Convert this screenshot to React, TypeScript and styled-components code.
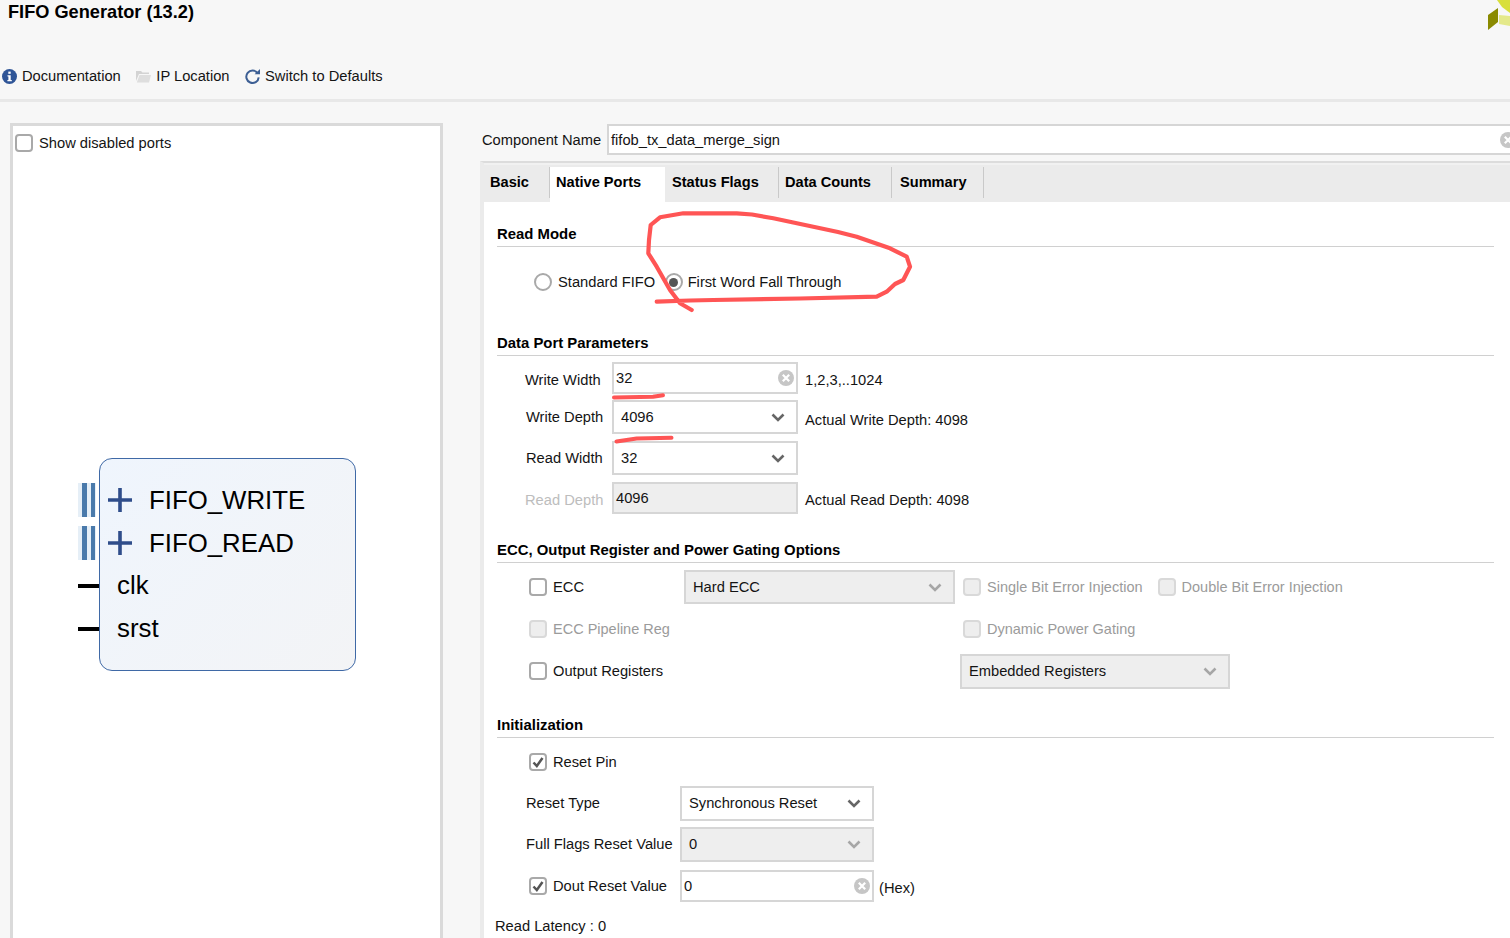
import React from "react";
import styled, { createGlobalStyle } from "styled-components";

const Global = createGlobalStyle`
  html, body { margin: 0; padding: 0; overflow: hidden; background: #f7f7f7; }
  #root { width: 1510px; height: 938px; overflow: hidden; position: relative; }
  * { box-sizing: border-box; }
`;

const Page = styled.div`
  width: 1510px; height: 938px; background: #f7f7f7; color: #141414;
  font-family: "Liberation Sans", Arial, sans-serif; font-size: 14.7px; line-height: 20px;
  overflow: hidden; position: relative;
`;
const Header = styled.header`
  height: 102px; border-bottom: 3px solid #e8e8e8; display: flex; flex-direction: column;
`;
const TitleRow = styled.div`
  height: 42px; display: flex; justify-content: space-between; align-items: flex-start;
`;
const Title = styled.h1`
  margin: 0; padding-left: 8px; font-size: 18.2px; line-height: 24px; font-weight: 700; color: #000;
`;
const Toolbar = styled.div`
  margin-top: 24px; padding-left: 2px; display: flex; gap: 15.5px; height: 20px;
`;
const ToolItem = styled.div`
  display: flex; align-items: center; gap: 5px; white-space: nowrap;
`;
const Main = styled.main`display: flex; align-items: flex-start;`;
const SidePanel = styled.aside`
  margin: 21px 0 0 10px; width: 433px; height: 830px; background: #fff;
  border: 3px solid #dadada; padding: 7px 0 0 2px;
`;
const CheckRow = styled.div<{ $ml?: number; $gap?: number; $muted?: boolean }>`
  display: flex; align-items: center; gap: ${p => p.$gap ?? 6}px; margin-left: ${p => p.$ml ?? 0}px;
  white-space: nowrap; color: ${p => (p.$muted ? "#9b9b9b" : "inherit")};
  font-size: ${p => (p.$muted ? "14.5px" : "inherit")};
`;
const Box = styled.span<{ $disabled?: boolean }>`
  width: 18px; height: 18px; border-radius: 4px; flex: none; display: flex; align-items: center; justify-content: center;
  border: 2px solid ${p => (p.$disabled ? "#d9d9d9" : "#a9a9a9")};
  background: ${p => (p.$disabled ? "#eeeeee" : "#fff")};
`;
const Symbol = styled.div`display: flex; margin: 305px 0 0 63px;`;
const PinColumn = styled.div`width: 21px; padding-top: 20px;`;
const PinSlot = styled.div`height: 43px; display: flex; align-items: center;`;
const BusPin = styled.div`
  width: 18px; height: 34px; background: #e6eff7; display: flex; gap: 4px; padding: 0 0 0 4px;
`;
const BusBar = styled.span`width: 4.5px; height: 100%; background: #4a7aab;`;
const WirePin = styled.span`width: 21px; height: 4px; background: #000;`;
const Block = styled.div`
  width: 257px; height: 213px; border: 1px solid #3f69a6; border-radius: 13px; padding-top: 19px;
  background: linear-gradient(135deg, #eff5fd, #f3f4f6); color: #000;
`;
const Port = styled.div<{ $plain?: boolean }>`
  height: 43px; display: flex; align-items: center; padding-left: ${p => (p.$plain ? 17 : 8)}px;
  padding-bottom: ${p => (p.$plain ? 2 : 0)}px;
  font-size: 25.8px; line-height: 30px;
`;
const PortPlus = styled.svg`width: 24px; height: 24px; margin-right: 17px; flex: none;`;

const RightColumn = styled.section`margin: 22px 0 0 37px; width: 1030px;`;
const NameRow = styled.div`display: flex; align-items: center; padding-left: 2px; height: 31px; gap: 6px; white-space: nowrap;`;
const NameLabel = styled.span`width: 119px; flex: none;`;
const Field = styled.div<{ $w: number; $disabled?: boolean; $pad?: number }>`
  width: ${p => p.$w}px; height: 100%; flex: none; display: flex; align-items: center; justify-content: space-between;
  border: 2px solid #d6d6d6; background: ${p => (p.$disabled ? "#eeeeee" : "#fff")};
  padding: 0 ${p => (p.$pad === undefined ? 2 : 4)}px 0 ${p => p.$pad ?? 2}px; white-space: nowrap;
`;
const Value = styled.span<{ $dy?: number }>`padding-bottom: ${p => p.$dy ?? 0}px;`;
const ChevronSlot = styled.span`display: flex; padding-right: 7px;`;
const Tabs = styled.div`margin-top: 6px; border-top: 2px solid #dcdcdc; border-left: 4px solid #ebebeb; background: #fff; height: 790px;`;
const TabStrip = styled.div`height: 39px; background: #ebebeb; padding-top: 2px; display: flex; align-items: stretch; border-top: 2px solid #f1f1f1;`;
const Tab = styled.div<{ $w: number; $pl?: number; $active?: boolean; $sep?: boolean }>`
  width: ${p => p.$w}px; padding-left: ${p => p.$pl ?? 6}px; height: ${p => (p.$active ? 35 : 31)}px;
  background: ${p => (p.$active ? "#fff" : "transparent")}; font-weight: 700; font-size: 14.6px; color: #000;
  line-height: 30px; white-space: nowrap; border-right: ${p => (p.$sep ? "1px solid #c9c9c9" : "0")};
`;
const Heading = styled.h2<{ $mt?: number }>`
  margin: ${p => p.$mt ?? 0}px 16px 0 13px; height: 45px; padding-top: 24px; font-size: 14.9px; line-height: 16px; font-weight: 700;
  color: #000; border-bottom: 1px solid #d0d0d0;
`;
const Row = styled.div<{ $h: number; $mt: number; $pl: number }>`
  display: flex; align-items: center; height: ${p => p.$h}px; margin-top: ${p => p.$mt}px; padding-left: ${p => p.$pl}px; white-space: nowrap;
`;
const Label = styled.span<{ $w: number; $muted?: boolean; $dy?: number; $up?: number }>`
  width: ${p => p.$w}px; flex: none; color: ${p => (p.$muted ? "#bdbdbd" : "inherit")};
  padding-top: ${p => p.$dy ?? 0}px; padding-bottom: ${p => p.$up ?? 0}px;
`;
const Note = styled.span<{ $ml?: number; $dy?: number }>`
  margin-left: ${p => p.$ml ?? 7}px; padding-top: ${p => p.$dy ?? 0}px;
`;
const RadioBtn = styled.span<{ $ml?: number }>`
  width: 18px; height: 18px; border-radius: 50%; border: 2px solid #a9a9a9; background: #fff; flex: none;
  display: flex; align-items: center; justify-content: center; margin-left: ${p => p.$ml ?? 0}px;
`;
const RadioDot = styled.span`width: 9px; height: 9px; border-radius: 50%; background: #555;`;
const Latency = styled.div`margin: 14px 0 0 11px; height: 20px;`;
const Annotations = styled.svg`position: absolute; left: 0; top: 0; pointer-events: none;`;

const Check = () => (
  <svg width="14" height="14" viewBox="0 0 14 14"><path d="M2.5 7.5 L5.8 11 L11.5 3" fill="none" stroke="#555" strokeWidth="2.5" /></svg>
);
const Clear = ({ size = 16 }: { size?: number }) => (
  <svg width={size} height={size} viewBox="0 0 16 16" style={{ flex: "none" }}>
    <circle cx="8" cy="8" r="8" fill="#c6c6c6" />
    <path d="M4.8 4.8 L11.2 11.2 M11.2 4.8 L4.8 11.2" stroke="#fff" strokeWidth="2.2" />
  </svg>
);
const Chevron = ({ light }: { light?: boolean }) => (
  <svg width="14" height="9" viewBox="0 0 14 9" style={{ flex: "none" }}>
    <path d="M1.5 1.5 L7 7 L12.5 1.5" fill="none" stroke={light ? "#a6a6a6" : "#666"} strokeWidth="2.6" />
  </svg>
);
const CheckItem = ({ text, checked, disabled, ml, gap }: { text: string; checked?: boolean; disabled?: boolean; ml?: number; gap?: number }) => (
  <CheckRow $muted={disabled} $ml={ml} $gap={gap}>
    <Box $disabled={disabled}>{checked && <Check />}</Box>
    {text}
  </CheckRow>
);
const Select = ({ w, text, disabled, up }: { w: number; text: string; disabled?: boolean; up?: number }) => (
  <Field $w={w} $disabled={disabled} $pad={7}>
    <Value $dy={up}>{text}</Value>
    <ChevronSlot><Chevron light={disabled} /></ChevronSlot>
  </Field>
);
const PlusIcon = () => (
  <PortPlus viewBox="0 0 24 24"><path d="M0 12 H24 M12 0 V24" stroke="#2f4d8a" strokeWidth="3.6" /></PortPlus>
);

export default function App() {
  return (
    <Page>
      <Global />
      <Header>
        <TitleRow>
          <Title>FIFO Generator (13.2)</Title>
          <svg width="22" height="30" viewBox="0 0 22 30">
            <polygon points="0,15 10,8 10,22 0,30" fill="#8a8a00" />
            <polygon points="9,0 22,0 22,13 14,7" fill="#d8df3a" />
            <polygon points="11,15 22,16 22,26 11,24" fill="#e4e98a" />
          </svg>
        </TitleRow>
        <Toolbar>
          <ToolItem>
            <svg width="15" height="15" viewBox="0 0 15 15">
              <circle cx="7.5" cy="7.5" r="7.5" fill="#2f5597" />
              <rect x="6.3" y="2.6" width="2.4" height="2.2" fill="#fff" />
              <path d="M5.5 6.2 H8.7 V11 H9.8 V12.3 H5.4 V11 H6.4 V7.4 H5.5 Z" fill="#fff" />
            </svg>
            Documentation
          </ToolItem>
          <ToolItem>
            <svg width="15" height="13" viewBox="0 0 15 13">
              <path d="M0 1 H5 L6.5 2.5 H13 V4 H3 L0 11 Z" fill="#d3d3d3" />
              <path d="M3.5 5 H15 L13 12.5 H0.8 Z" fill="#dedede" />
            </svg>
            IP Location
          </ToolItem>
          <ToolItem>
            <svg width="15" height="15" viewBox="0 0 15 15">
              <path d="M12.6 4.2 A6.2 6.2 0 1 0 13.7 8.3" fill="none" stroke="#3d5f94" strokeWidth="2" />
              <path d="M9.6 5.2 H15 V0 Z" fill="#3d5f94" />
            </svg>
            Switch to Defaults
          </ToolItem>
        </Toolbar>
      </Header>
      <Main>
        <SidePanel>
          <CheckItem text="Show disabled ports" />
          <Symbol>
            <PinColumn>
              <PinSlot><BusPin><BusBar /><BusBar /></BusPin></PinSlot>
              <PinSlot><BusPin><BusBar /><BusBar /></BusPin></PinSlot>
              <PinSlot><WirePin /></PinSlot>
              <PinSlot><WirePin /></PinSlot>
            </PinColumn>
            <Block>
              <Port><PlusIcon />FIFO_WRITE</Port>
              <Port><PlusIcon />FIFO_READ</Port>
              <Port $plain>clk</Port>
              <Port $plain>srst</Port>
            </Block>
          </Symbol>
        </SidePanel>
        <RightColumn>
          <NameRow>
            <NameLabel>Component Name</NameLabel>
            <Field $w={913}>
              <span>fifob_tx_data_merge_sign</span>
              <Clear />
            </Field>
          </NameRow>
          <Tabs>
            <TabStrip>
              <Tab $w={66} $sep>Basic</Tab>
              <Tab $w={115} $active>Native Ports</Tab>
              <Tab $w={114} $pl={7} $sep>Status Flags</Tab>
              <Tab $w={113} $sep>Data Counts</Tab>
              <Tab $w={92} $pl={8} $sep>Summary</Tab>
            </TabStrip>
            <Heading>Read Mode</Heading>
            <Row $h={32} $mt={19} $pl={50}>
              <RadioBtn />
              <Note $ml={6}>Standard FIFO</Note>
              <RadioBtn $ml={9.5}><RadioDot /></RadioBtn>
              <Note $ml={5}>First Word Fall Through</Note>
            </Row>
            <Heading $mt={13}>Data Port Parameters</Heading>
            <Row $h={32} $mt={6} $pl={41}>
              <Label $w={87} $dy={4}>Write Width</Label>
              <Field $w={186}><Value $dy={1}>32</Value><Clear /></Field>
              <Note $dy={3}>1,2,3,..1024</Note>
            </Row>
            <Row $h={34} $mt={6} $pl={42}>
              <Label $w={86}>Write Depth</Label>
              <Select w={186} text="4096" />
              <Note $dy={6}>Actual Write Depth: 4098</Note>
            </Row>
            <Row $h={34} $mt={7} $pl={42}>
              <Label $w={86}>Read Width</Label>
              <Select w={186} text="32" />
            </Row>
            <Row $h={32} $mt={7} $pl={41}>
              <Label $w={87} $muted $dy={4}>Read Depth</Label>
              <Field $w={186} $disabled><Value $dy={1}>4096</Value></Field>
              <Note $dy={4}>Actual Read Depth: 4098</Note>
            </Row>
            <Heading $mt={4}>ECC, Output Register and Power Gating Options</Heading>
            <Row $h={34} $mt={7} $pl={45}>
              <Label $w={155}><CheckItem text="ECC" /></Label>
              <Select w={271} text="Hard ECC" disabled />
              <CheckItem ml={8} text="Single Bit Error Injection" disabled />
              <CheckItem ml={15} text="Double Bit Error Injection" disabled />
            </Row>
            <Row $h={34} $mt={8} $pl={45}>
              <Label $w={434}><CheckItem text="ECC Pipeline Reg" disabled /></Label>
              <CheckItem text="Dynamic Power Gating" disabled />
            </Row>
            <Row $h={35} $mt={8} $pl={45}>
              <Label $w={431} $up={1}><CheckItem text="Output Registers" /></Label>
              <Select w={270} text="Embedded Registers" disabled up={1} />
            </Row>
            <Heading $mt={4}>Initialization</Heading>
            <Row $h={24} $mt={12} $pl={45}>
              <CheckItem text="Reset Pin" checked />
            </Row>
            <Row $h={35} $mt={12} $pl={42}>
              <Label $w={154} $up={1}>Reset Type</Label>
              <Select w={194} text="Synchronous Reset" up={1} />
            </Row>
            <Row $h={35} $mt={6} $pl={42}>
              <Label $w={154} $up={1}>Full Flags Reset Value</Label>
              <Select w={194} text="0" disabled up={1} />
            </Row>
            <Row $h={32} $mt={8} $pl={45}>
              <Label $w={151}><CheckItem text="Dout Reset Value" checked /></Label>
              <Field $w={194}><span>0</span><Clear /></Field>
              <Note $ml={5} $dy={3}>(Hex)</Note>
            </Row>
            <Latency>Read Latency : 0</Latency>
          </Tabs>
        </RightColumn>
      </Main>
      <Annotations width="1510" height="938" viewBox="0 0 1510 938">
        <g fill="none" stroke="#ff5555" strokeLinecap="round" strokeLinejoin="round">
          <path strokeWidth="4.2" d="M656.7 301.7 L690 300.5 L713.3 300 L800 298.5 L876.7 296.7 L886.7 291.7 L895 284 L903.3 280 L910 266.7 L906.7 256.7 L890 248.3 L856.7 236.7 L838 232 L813.3 226.7 L773.3 218.3 L752 214.5 L736.7 213.3 L683.3 213.3 L660 217.3 L650.7 225 L649 240 L648.3 253.3 L656.7 266.7 L670 290 L680 303.3 L691.7 310" />
          <path strokeWidth="4" d="M614 397.5 L653 396.7 L663 395.2" />
          <path strokeWidth="4" d="M616.5 441.5 L636.7 438.5 L671.5 437.8" />
        </g>
      </Annotations>
    </Page>
  );
}
